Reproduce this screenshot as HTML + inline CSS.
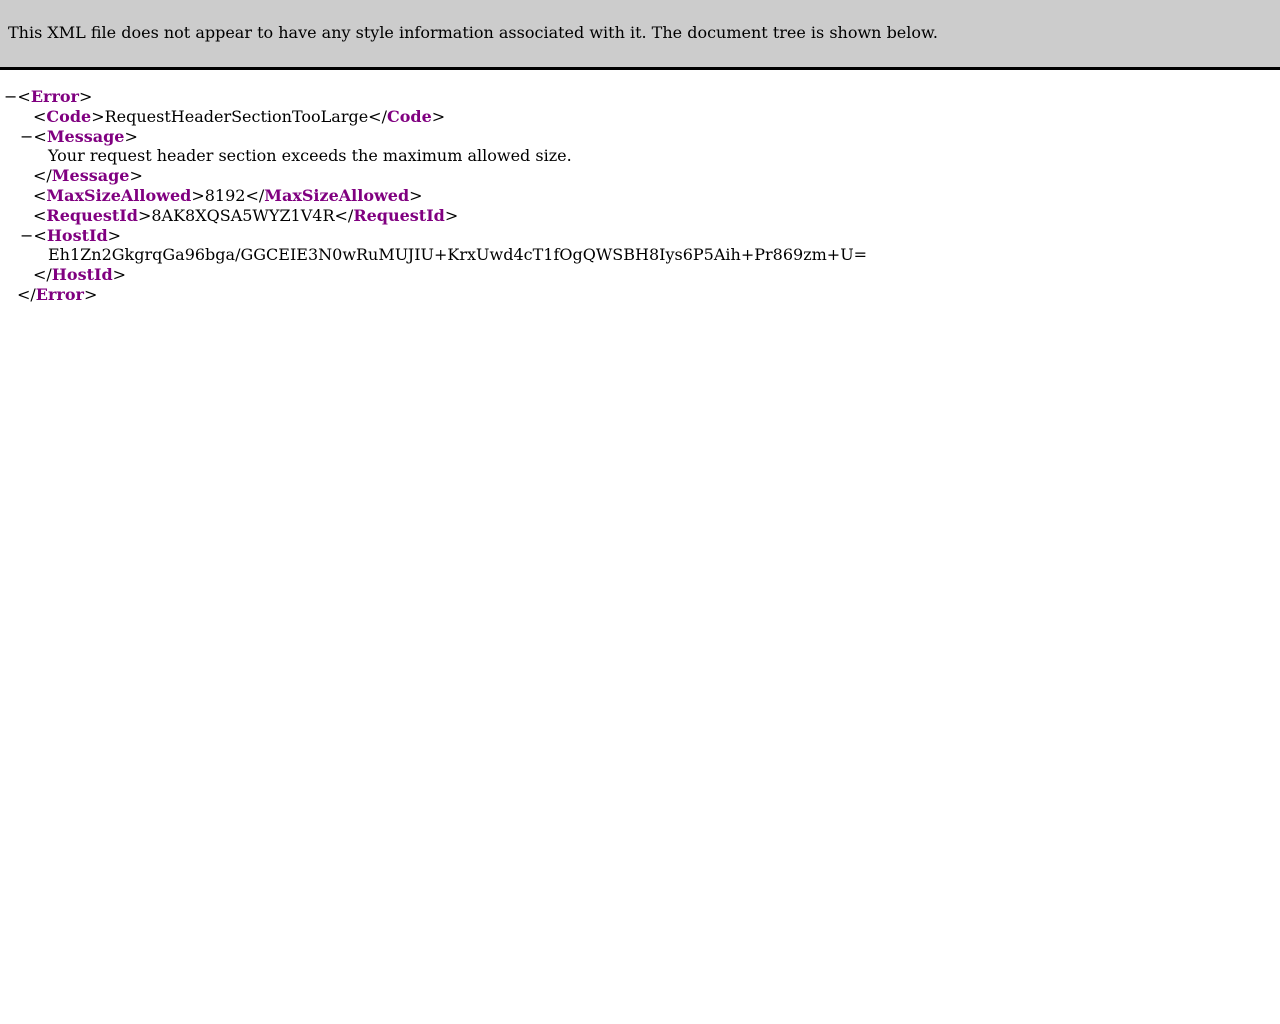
<!DOCTYPE html>
<html><head><meta charset="utf-8"><style>
html,body{margin:0;padding:0;background:#fff;width:1280px;height:1024px;overflow:hidden;}
body{font-family:"DejaVu Serif","Liberation Serif",serif;font-size:16px;color:#000;position:relative;}
.hdr{position:absolute;left:0;top:0;width:1280px;height:67px;background:#ccc;border-bottom:3px solid #000;}
.hdr span{position:absolute;left:8px;top:23px;line-height:20px;white-space:pre;}
.l{position:absolute;line-height:20px;white-space:pre;}
b{color:#800080;font-weight:bold;}
</style></head><body>
<div class="hdr"><span>This XML file does not appear to have any style information associated with it. The document tree is shown below.</span></div>
<div class="l" style="left:4px;top:87px">−&lt;<b>Error</b>&gt;</div>
<div class="l" style="left:33px;top:107px">&lt;<b>Code</b>&gt;RequestHeaderSectionTooLarge&lt;/<b>Code</b>&gt;</div>
<div class="l" style="left:20px;top:127px">−&lt;<b>Message</b>&gt;</div>
<div class="l" style="left:48px;top:146px">Your request header section exceeds the maximum allowed size.</div>
<div class="l" style="left:33px;top:166px">&lt;/<b>Message</b>&gt;</div>
<div class="l" style="left:33px;top:186px">&lt;<b>MaxSizeAllowed</b>&gt;8192&lt;/<b>MaxSizeAllowed</b>&gt;</div>
<div class="l" style="left:33px;top:206px">&lt;<b>RequestId</b>&gt;8AK8XQSA5WYZ1V4R&lt;/<b>RequestId</b>&gt;</div>
<div class="l" style="left:20px;top:226px">−&lt;<b>HostId</b>&gt;</div>
<div class="l" style="left:48px;top:245px">Eh1Zn2GkgrqGa96bga/GGCEIE3N0wRuMUJIU+KrxUwd4cT1fOgQWSBH8Iys6P5Aih+Pr869zm+U=</div>
<div class="l" style="left:33px;top:265px">&lt;/<b>HostId</b>&gt;</div>
<div class="l" style="left:17px;top:285px">&lt;/<b>Error</b>&gt;</div>
</body></html>
